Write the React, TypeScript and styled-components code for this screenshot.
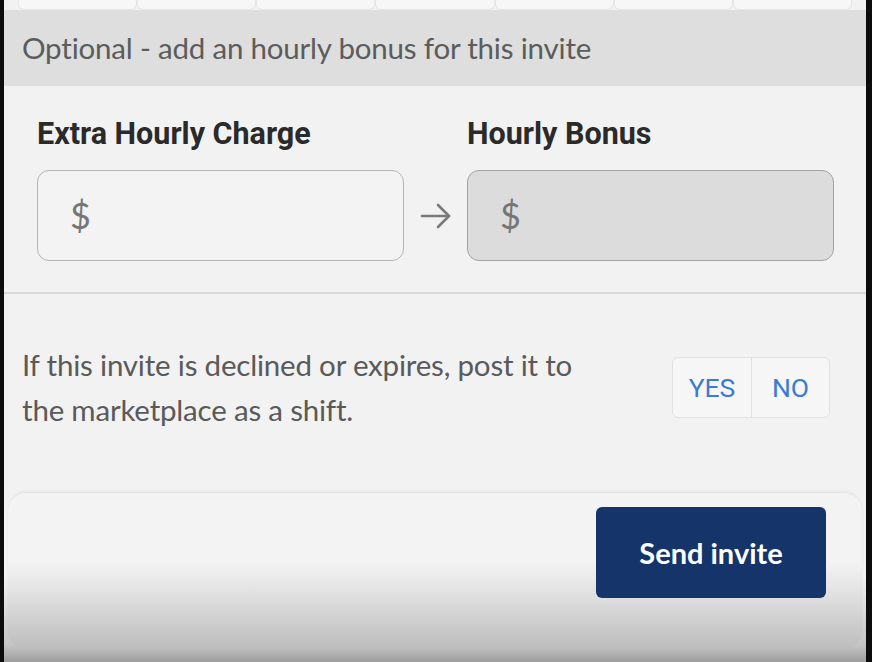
import styled, { createGlobalStyle } from 'styled-components';

const GlobalStyle = createGlobalStyle`
  html, body {
    margin: 0;
    padding: 0;
    background: #0c0c0c;
  }
  * {
    box-sizing: border-box;
  }
`;

const Frame = styled.div`
  width: 872px;
  height: 662px;
  padding: 0 6px 0 4px;
  background: #0c0c0c;
  overflow: hidden;
`;

const Screen = styled.div`
  height: 100%;
  display: flex;
  flex-direction: column;
  background: #f2f2f2;
  font-family: 'Lato', 'Open Sans', sans-serif;
  overflow: hidden;
`;

const DayRow = styled.div`
  display: grid;
  grid-template-columns: repeat(7, 1fr);
  height: 10px;
  padding: 0 14px;
  background: #f2f2f2;
`;

const DayCell = styled.div`
  background: #f7f7f7;
  border: 1px solid #e6e6e6;
  border-top: none;
  border-radius: 0 0 6px 6px;
`;

const Banner = styled.div`
  height: 76px;
  display: flex;
  align-items: center;
  padding: 0 18px 2px;
  background: #dedede;
  color: #5c5c5c;
  font-size: 29.5px;
  letter-spacing: -0.2px;
`;

const ChargeSection = styled.section`
  display: grid;
  grid-template-columns: 1fr 63px 1fr;
  grid-template-rows: auto 91px;
  row-gap: 19px;
  padding: 31px 32px 31px 33px;
  border-bottom: 2px solid #d9d9d9;
`;

const FieldLabel = styled.div`
  font-family: 'Roboto', 'Liberation Sans', sans-serif;
  font-weight: 700;
  font-size: 30.5px;
  line-height: 34px;
  color: #2a2a2a;
`;

const MoneyInput = styled.div<{ $disabled?: boolean }>`
  display: flex;
  align-items: center;
  padding: 0 32px 2px;
  border-radius: 12px;
  border: 1.5px solid ${(p) => (p.$disabled ? '#a3a3a3' : '#b5b5b5')};
  background: ${(p) => (p.$disabled ? '#dcdcdc' : '#f3f3f3')};
  color: #767676;
  font-size: 36px;
`;

const ArrowCell = styled.div`
  display: flex;
  align-items: center;
  justify-content: center;
  color: #7a7a7a;
`;

const RepostSection = styled.section`
  display: flex;
  align-items: center;
  justify-content: space-between;
  padding: 48px 36px 0 18px;
`;

const RepostText = styled.p`
  margin: 0;
  width: 580px;
  font-size: 29.5px;
  line-height: 45px;
  color: #5a5a5a;
  letter-spacing: -0.2px;
`;

const Toggle = styled.div`
  display: flex;
  height: 61px;
  border: 1px solid #e1e1e1;
  border-radius: 6px;
  background: #f6f6f6;
  overflow: hidden;
`;

const ToggleOption = styled.button`
  width: 78px;
  border: none;
  background: transparent;
  font-family: 'Roboto', 'Liberation Sans', sans-serif;
  font-size: 26.5px;
  color: #3a7bd5;
  padding: 0;
  & + & {
    border-left: 1px solid #e1e1e1;
  }
`;

const Bottom = styled.div`
  margin-top: auto;
  padding: 0 4px;
  height: 170px;
  background: linear-gradient(to bottom, #f2f2f2 0%, #f2f2f2 50%, #c4c4c4 90%, #9e9e9e 100%);
`;

const FooterCard = styled.footer`
  height: 156px;
  display: flex;
  justify-content: flex-end;
  align-items: flex-start;
  padding: 14px 36px 0;
  border-radius: 18px;
  border-top: 1px solid #e3e3e3;
  box-shadow: 0 -1px 3px rgba(0, 0, 0, 0.05);
  background: linear-gradient(to bottom, #f3f3f3 0%, #f3f3f3 45%, #dedede 68%, #bdbdbd 100%);
`;

const SendButton = styled.button`
  width: 230px;
  height: 91px;
  border: none;
  border-radius: 6px;
  background: #14346a;
  color: #fff;
  font-family: 'Lato', 'Open Sans', sans-serif;
  font-weight: 700;
  font-size: 29px;
`;

const ArrowIcon = () => (
  <svg width="34" height="30" viewBox="0 0 34 30" fill="none" stroke="currentColor" strokeWidth="2.6" strokeLinecap="round" strokeLinejoin="round">
    <line x1="3" y1="15" x2="30" y2="15" />
    <polyline points="19,4 30,15 19,26" />
  </svg>
);

export default function App() {
  return (
    <>
      <GlobalStyle />
      <Frame>
        <Screen>
          <DayRow>
            {Array.from({ length: 7 }).map((_, i) => (
              <DayCell key={i} />
            ))}
          </DayRow>
          <Banner>Optional - add an hourly bonus for this invite</Banner>
          <ChargeSection>
            <FieldLabel>Extra Hourly Charge</FieldLabel>
            <div />
            <FieldLabel>Hourly Bonus</FieldLabel>
            <MoneyInput>$</MoneyInput>
            <ArrowCell>
              <ArrowIcon />
            </ArrowCell>
            <MoneyInput $disabled>$</MoneyInput>
          </ChargeSection>
          <RepostSection>
            <RepostText>If this invite is declined or expires, post it to the marketplace as a shift.</RepostText>
            <Toggle>
              <ToggleOption>YES</ToggleOption>
              <ToggleOption>NO</ToggleOption>
            </Toggle>
          </RepostSection>
          <Bottom>
            <FooterCard>
              <SendButton>Send invite</SendButton>
            </FooterCard>
          </Bottom>
        </Screen>
      </Frame>
    </>
  );
}
